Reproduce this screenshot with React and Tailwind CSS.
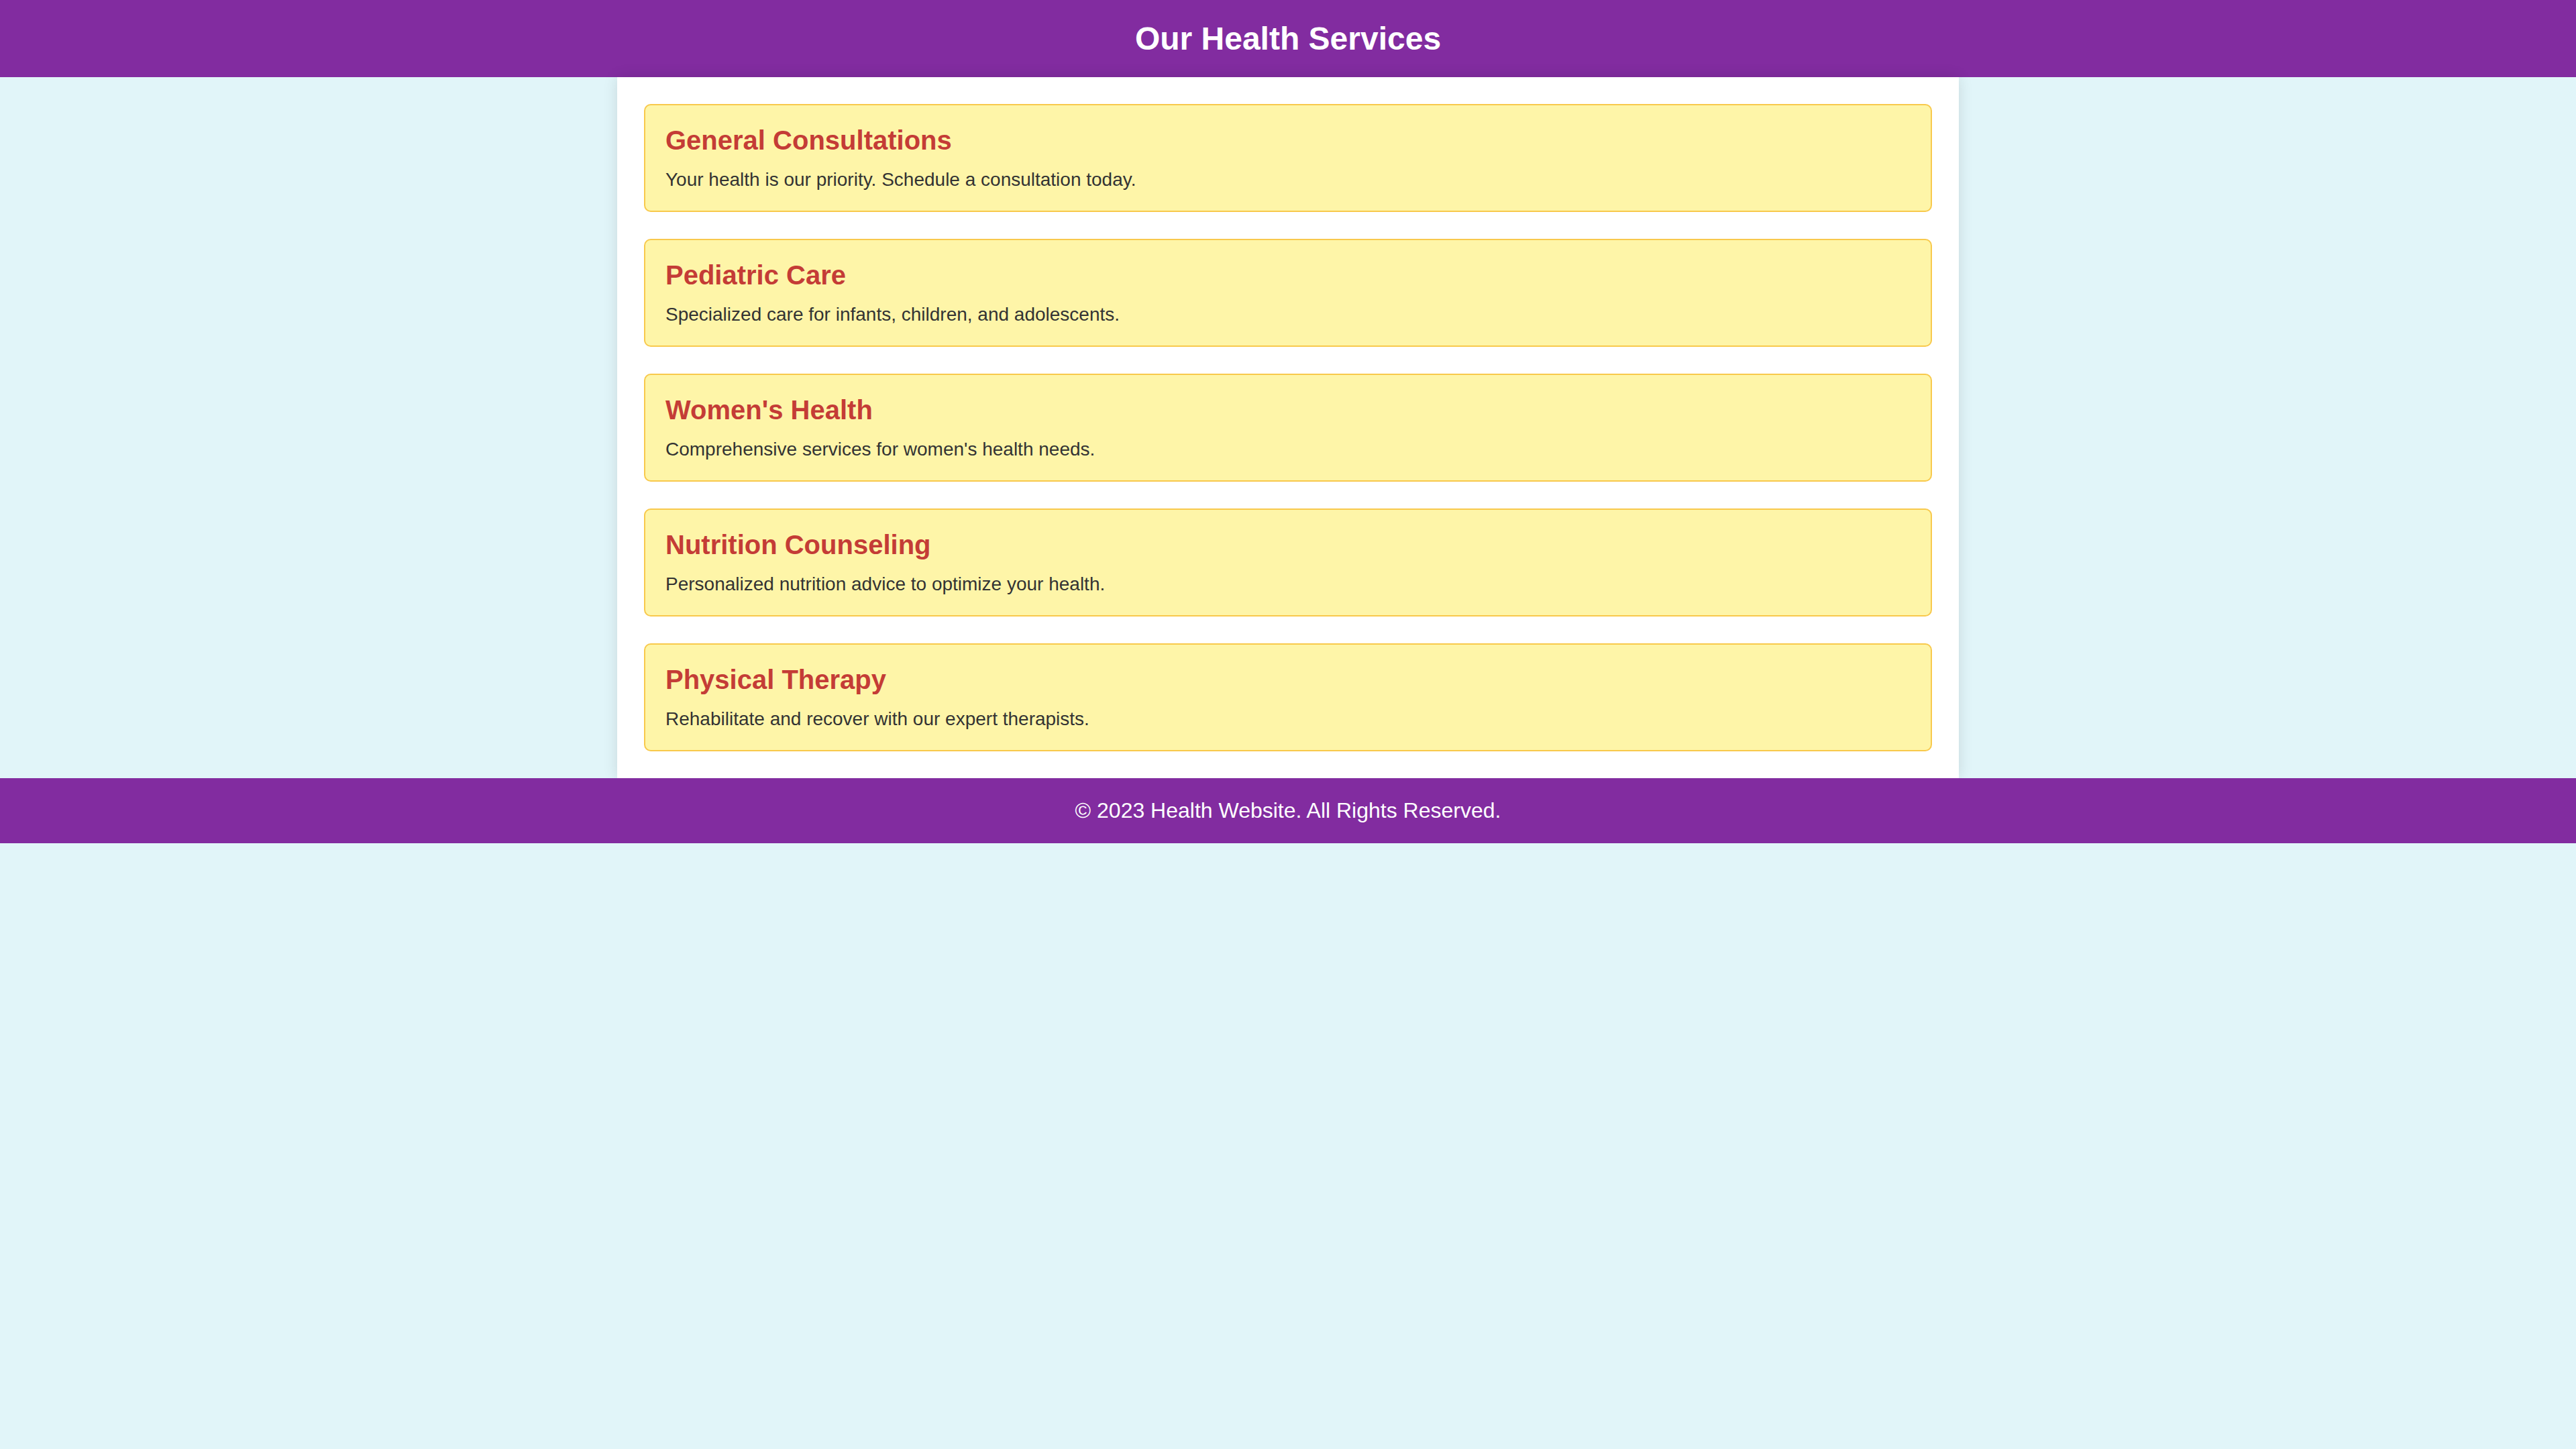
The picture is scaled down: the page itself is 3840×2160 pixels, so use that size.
import React from "react";

const services = [
  {
    title: "General Consultations",
    text: "Your health is our priority. Schedule a consultation today.",
  },
  {
    title: "Pediatric Care",
    text: "Specialized care for infants, children, and adolescents.",
  },
  {
    title: "Women's Health",
    text: "Comprehensive services for women's health needs.",
  },
  {
    title: "Nutrition Counseling",
    text: "Personalized nutrition advice to optimize your health.",
  },
  {
    title: "Physical Therapy",
    text: "Rehabilitate and recover with our expert therapists.",
  },
];

const App = () => {
  return (
    <div className="min-h-[2160px] bg-[#e1f5f9] font-['Liberation_Sans',Arial,sans-serif]">
      <header className="bg-[#822ca0] py-[30px] text-center text-white">
        <h1 className="text-[48px] font-bold leading-[55px]">Our Health Services</h1>
      </header>

      <main className="relative mx-auto flex w-[2000px] flex-col gap-[40px] bg-white p-[40px] shadow-[0_0_20px_rgba(0,0,0,0.12)]">
        {services.map((service) => (
          <section
            key={service.title}
            className="rounded-[10px] border-2 border-[#f8c94c] bg-[#fef5a8] p-[30px]"
          >
            <h2 className="mb-[20px] text-[40px] font-bold leading-[45px] text-[#c43c36]">
              {service.title}
            </h2>
            <p className="text-[28px] leading-[32px] text-[#333333]">{service.text}</p>
          </section>
        ))}
      </main>

      <footer className="relative bg-[#822ca0] py-[30px] text-center text-white">
        <p className="text-[32px] leading-[37px]">© 2023 Health Website. All Rights Reserved.</p>
      </footer>
    </div>
  );
};

export default App;
